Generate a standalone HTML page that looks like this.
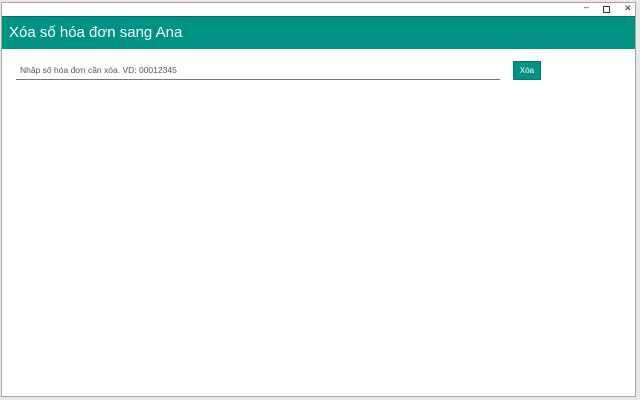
<!DOCTYPE html>
<html><head><meta charset="utf-8"><style>
html,body{margin:0;padding:0;width:640px;height:400px;overflow:hidden;background:#e8e8e8;font-family:"Liberation Sans",sans-serif;}
.win{position:absolute;left:1px;top:2px;width:635px;height:395px;background:#fff;border:1px solid #9aa;box-sizing:border-box;}
.tb{position:absolute;left:0;top:0;right:0;height:13px;background:#fff;}
.ctl{position:absolute;top:1px;font-size:9px;color:#333;}
.hd{position:absolute;left:0;right:0;top:13px;height:32px;background:#009385;border-top:1px solid #00695f;}
.hd span{position:absolute;left:7px;top:7px;color:#fff;font-size:15px;}
.in{position:absolute;left:14px;top:62px;width:484px;height:15px;border-bottom:1px solid #777;font-size:8.5px;color:#555;padding-left:4px;box-sizing:border-box;}
.btn{position:absolute;left:511px;top:58px;width:28px;height:19px;background:#009385;border:1px solid #00796b;box-sizing:border-box;color:#fff;font-size:8px;text-align:center;line-height:17px;}
</style></head><body>
<div class="win">
<div class="tb">
<span class="ctl" style="left:582px;top:-1px">–</span>
<span style="position:absolute;left:601px;top:3px;width:5px;height:5px;border:1px solid #333"></span>
<span class="ctl" style="left:622px;top:0">✕</span>
</div>
<div class="hd"><span>Xóa số hóa đơn sang Ana</span></div>
<div class="in">Nhập số hóa đơn cần xóa. VD: 00012345</div>
<div class="btn">Xóa</div>
</div>
</body></html>
